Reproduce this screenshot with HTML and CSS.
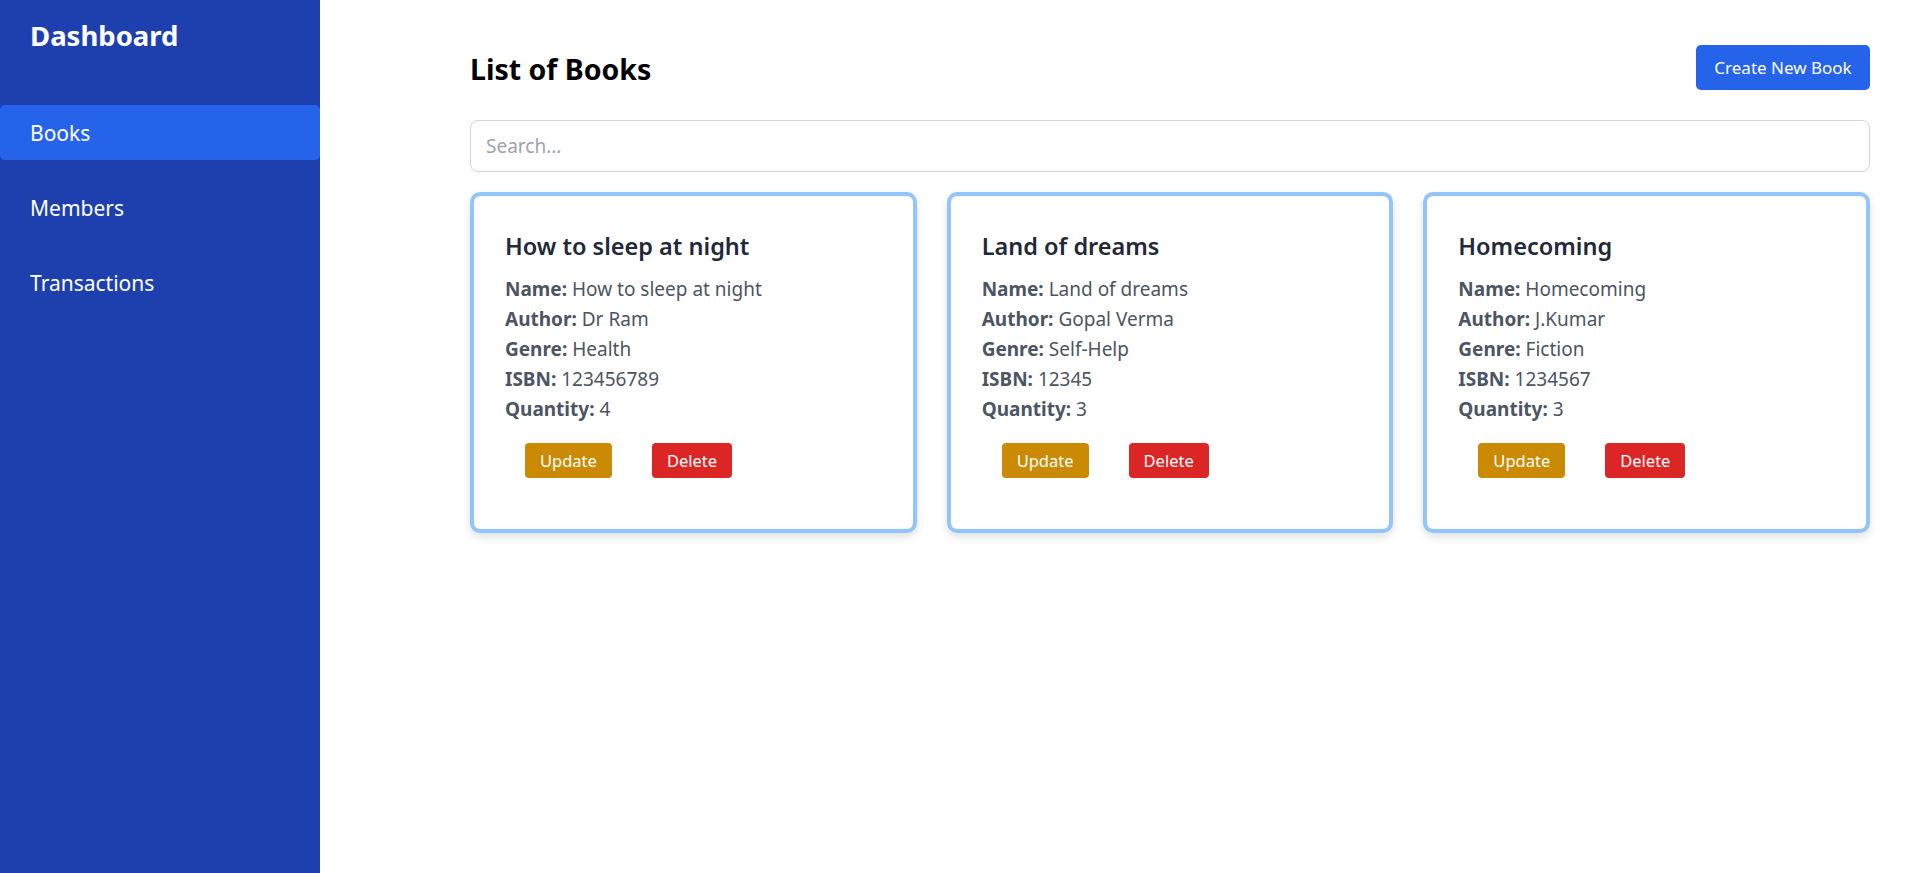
FILE: index.html
```html
<!DOCTYPE html>
<html lang="en">
<head>
<meta charset="utf-8">
<title>Dashboard</title>
<link rel="stylesheet" href="styles.css">
</head>
<body>
<aside class="sidebar">
  <div class="brand">Dashboard</div>
  <nav class="nav">
    <a class="nav-item active" href="#">Books</a>
    <a class="nav-item" href="#">Members</a>
    <a class="nav-item" href="#">Transactions</a>
  </nav>
</aside>
<main class="main">
  <div class="header">
    <h1 class="title">List of Books</h1>
    <button class="btn-create">Create New Book</button>
  </div>
  <input class="search" type="text" placeholder="Search...">
  <div class="grid">
    <div class="card">
      <h2 class="card-title">How to sleep at night</h2>
      <p class="line"><b>Name:</b> How to sleep at night</p>
      <p class="line"><b>Author:</b> Dr Ram</p>
      <p class="line"><b>Genre:</b> Health</p>
      <p class="line"><b>ISBN:</b> 123456789</p>
      <p class="line"><b>Quantity:</b> 4</p>
      <div class="actions">
        <button class="btn btn-update">Update</button>
        <button class="btn btn-delete">Delete</button>
      </div>
    </div>
    <div class="card">
      <h2 class="card-title">Land of dreams</h2>
      <p class="line"><b>Name:</b> Land of dreams</p>
      <p class="line"><b>Author:</b> Gopal Verma</p>
      <p class="line"><b>Genre:</b> Self-Help</p>
      <p class="line"><b>ISBN:</b> 12345</p>
      <p class="line"><b>Quantity:</b> 3</p>
      <div class="actions">
        <button class="btn btn-update">Update</button>
        <button class="btn btn-delete">Delete</button>
      </div>
    </div>
    <div class="card">
      <h2 class="card-title">Homecoming</h2>
      <p class="line"><b>Name:</b> Homecoming</p>
      <p class="line"><b>Author:</b> J.Kumar</p>
      <p class="line"><b>Genre:</b> Fiction</p>
      <p class="line"><b>ISBN:</b> 1234567</p>
      <p class="line"><b>Quantity:</b> 3</p>
      <div class="actions">
        <button class="btn btn-update">Update</button>
        <button class="btn btn-delete">Delete</button>
      </div>
    </div>
  </div>
</main>
</body>
</html>
```

FILE: styles.css
```css
* { box-sizing: border-box; }
html, body { margin: 0; height: 100%; }
body {
  display: flex;
  font-family: "Noto Sans", "Open Sans", sans-serif;
  background: #ffffff;
}
.sidebar {
  width: 320px;
  flex: 0 0 320px;
  background: #1e40af;
  color: #ffffff;
  min-height: 100vh;
}
.brand {
  font-size: 27.5px;
  font-weight: 700;
  line-height: 40px;
  padding: 16px 30px 0;
}
.nav {
  display: flex;
  flex-direction: column;
  gap: 20px;
  margin-top: 49px;
}
.nav-item {
  display: flex;
  align-items: center;
  height: 55px;
  padding-left: 30px;
  color: #ffffff;
  text-decoration: none;
  font-size: 21px;
  border-radius: 5px;
}
.nav-item.active { background: #2563eb; }
.main {
  flex: 1;
  padding: 45px 45px 0 150px;
}
.header {
  display: flex;
  justify-content: space-between;
  align-items: center;
  margin-bottom: 30px;
}
.title {
  margin: 0;
  padding-top: 2px;
  font-size: 28.5px;
  font-weight: 700;
  color: #000000;
}
.btn-create {
  height: 45px;
  width: 174px;
  border: none;
  border-radius: 5px;
  background: #2563eb;
  color: #ffffff;
  font-family: inherit;
  font-size: 17px;
}
.search {
  display: block;
  width: 100%;
  height: 52px;
  border: 1px solid #d1d5db;
  border-radius: 8px;
  padding: 0 15px;
  font-family: inherit;
  font-size: 19px;
  color: #111827;
  margin-bottom: 20px;
}
.search::placeholder { color: #9ca3af; }
.grid {
  display: grid;
  grid-template-columns: repeat(3, 1fr);
  gap: 30px;
}
.card {
  border: 4px solid #93c5fd;
  border-radius: 10px;
  padding: 30px 30px 30px 31px;
  box-shadow: 0 4px 8px rgba(0, 0, 0, 0.12);
  background: #ffffff;
}
.card-title {
  margin: 3px 0 10px;
  font-size: 23.5px;
  font-weight: 600;
  line-height: 35px;
  color: #1f2937;
}
.line {
  margin: 0;
  font-size: 19px;
  line-height: 30px;
  color: #4b5563;
}
.line b { font-weight: 700; }
.actions {
  display: flex;
  margin: 19px 0 21px;
}
.btn {
  margin: 0 20px;
  border: none;
  border-radius: 4px;
  padding: 5px 15px;
  font-family: inherit;
  font-size: 16.5px;
  line-height: 25px;
  color: #ffffff;
}
.btn-update { background: #ca8a04; }
.btn-delete { background: #dc2626; }
```
